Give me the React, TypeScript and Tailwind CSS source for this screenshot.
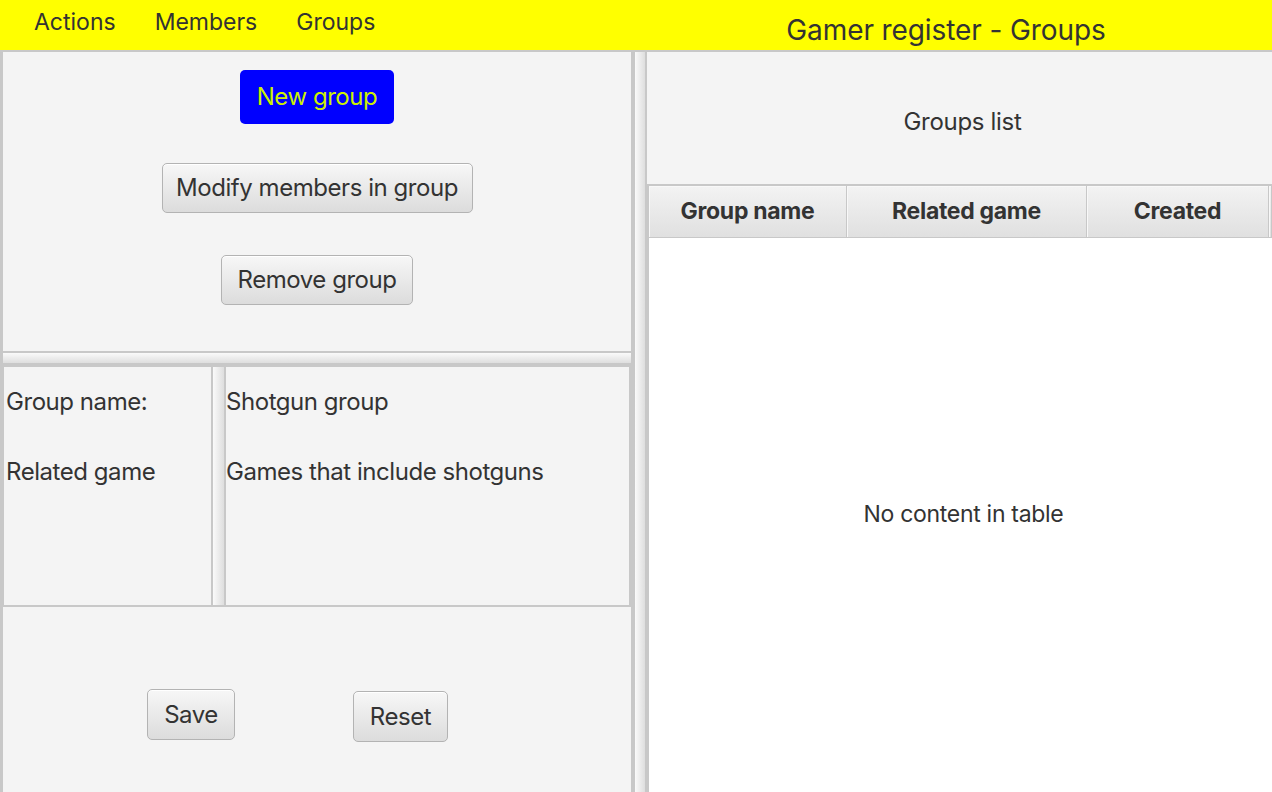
const btn =
  "flex items-center justify-center rounded-[5px] border border-[#b3b3b3] bg-gradient-to-b from-[#f7f7f7] to-[#dcdcdc] text-[24px] tracking-[-0.45px] text-[#333333] shadow-[inset_0_1px_0_#ffffff]";

const hDivider = "h-[10px] bg-gradient-to-b from-[#fafafa] to-[#dedede]";

function HeaderCell({ label, className }: { label: string; className: string }) {
  return (
    <div
      className={`flex items-center justify-center border-r border-[#c8c8c8] bg-gradient-to-b from-[#f3f3f3] to-[#e0e0e0] text-[23px] font-bold tracking-[-0.3px] text-[#333333] shadow-[inset_1px_1px_0_#f8f8f8] ${className}`}
    >
      {label}
    </div>
  );
}

export default function App() {
  return (
    <div className="flex h-[792px] w-[1272px] flex-col overflow-hidden bg-[#c8c8c8] font-['Inter',sans-serif] text-[#333333]">
      {/* menu bar */}
      <div className="flex h-[50px] shrink-0 items-center bg-[#ffff00]">
        <div className="mb-[5px] flex gap-[39px] pl-[34px] text-[23px]">
          <span>Actions</span>
          <span>Members</span>
          <span>Groups</span>
        </div>
        <div className="ml-[411px] mt-[9px] text-[28px] tracking-[-0.1px]">Gamer register - Groups</div>
      </div>

      <div className="mt-[2px] flex min-h-0 flex-1">
        {/* left side */}
        <div className="flex w-[631px] flex-col border-l-[3px] border-[#c8c8c8] bg-[#f4f4f4]">
          <div className="flex h-[299px] flex-col items-center pt-[18px]">
            <button className="flex h-[54px] w-[154px] items-center justify-center rounded-[5px] bg-[#0000ff] text-[24px] tracking-[-0.45px] text-[#ccf000]">
              New group
            </button>
            <button className={`${btn} mt-[39px] h-[50px] w-[311px]`}>Modify members in group</button>
            <button className={`${btn} mt-[42px] h-[50px] w-[192px]`}>Remove group</button>
          </div>

          <div className="h-[2px] bg-[#c8c8c8]" />
          <div className={hDivider} />
          <div className="h-[4px] bg-[#c8c8c8]" />

          <div className="flex h-[238px] text-[24px] tracking-[-0.45px]">
            <div className="w-[208px] border-l border-[#c8c8c8] pl-[2px]">
              <div className="flex h-[70px] items-center">Group name:</div>
              <div className="flex h-[70px] items-center">Related game</div>
            </div>
            <div className="w-[2px] bg-[#c8c8c8]" />
            <div className="w-[11px] bg-gradient-to-r from-[#fafafa] to-[#dedede]" />
            <div className="w-[2px] bg-[#c8c8c8]" />
            <div className="flex-1 border-r-2 border-[#c8c8c8]">
              <div className="flex h-[70px] items-center">Shotgun group</div>
              <div className="flex h-[70px] items-center">Games that include shotguns</div>
            </div>
          </div>

          <div className="h-[2px] bg-[#c8c8c8]" />

          <div className="flex flex-1 items-start pl-[144px] pt-[82px]">
            <button className={`${btn} h-[51px] w-[88px]`}>Save</button>
            <button className={`${btn} ml-[118px] mt-[2px] h-[51px] w-[95px]`}>Reset</button>
          </div>
        </div>

        {/* split divider */}
        <div className="w-[4px] bg-[#c8c8c8]" />
        <div className="w-[10px] bg-gradient-to-r from-[#fafafa] to-[#dedede]" />
        <div className="w-[2px] bg-[#c8c8c8]" />

        {/* right side */}
        <div className="flex flex-1 flex-col bg-[#f4f4f4]">
          <div className="flex h-[132px] items-center justify-center pl-[6px] pt-[8px] text-[24px] tracking-[-0.3px]">
            Groups list
          </div>
          <div className="flex flex-1 flex-col border-l-2 border-t-2 border-[#c8c8c8] bg-white">
            <div className="flex h-[52px] border-b border-[#c8c8c8]">
              <HeaderCell label="Group name" className="w-[198px]" />
              <HeaderCell label="Related game" className="w-[240px]" />
              <HeaderCell label="Created" className="w-[182px]" />
              <HeaderCell label="" className="flex-1" />
            </div>
            <div className="flex flex-1 items-center justify-center pb-[2px] pl-[6px] text-[23px] tracking-[-0.3px]">
              No content in table
            </div>
          </div>
        </div>
      </div>
    </div>
  );
}
